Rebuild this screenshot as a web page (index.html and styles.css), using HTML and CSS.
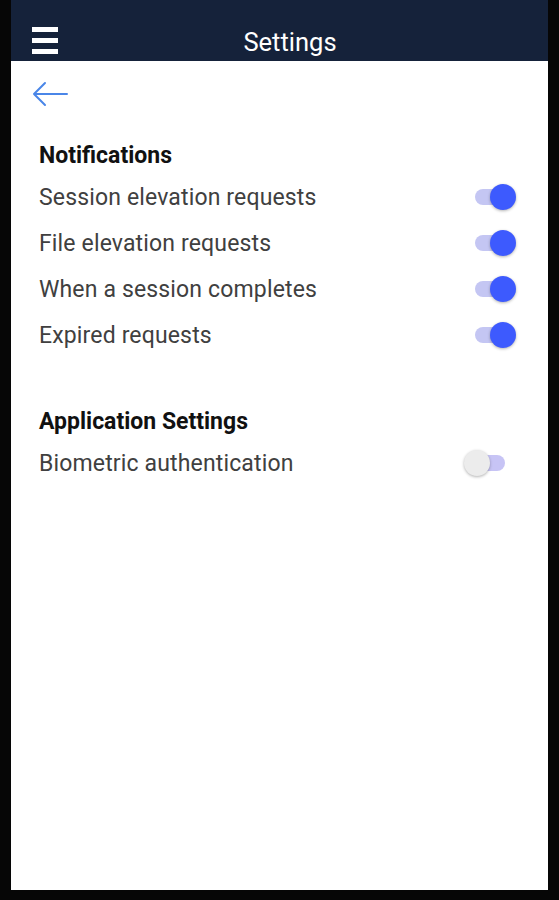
FILE: index.html
```html
<!DOCTYPE html>
<html lang="en">
<head>
    <meta charset="UTF-8">
    <meta name="viewport" content="width=device-width, initial-scale=1.0">
    <title>Settings</title>
    <link rel="stylesheet" href="styles.css">
</head>
<body>
    <div class="phone">
        <header class="topbar">
            <button class="menu-btn" aria-label="Menu">
                <span></span><span></span><span></span>
            </button>
            <h1>Settings</h1>
        </header>

        <main class="screen">
            <a class="back" href="#" aria-label="Back">
                <svg width="36" height="26" viewBox="0 0 36 26">
                    <path d="M35 13H2M13 2L2 13l11 11" fill="none" stroke="#4a86e8" stroke-width="2" stroke-linecap="round" stroke-linejoin="round"/>
                </svg>
            </a>

            <section class="group">
                <h2>Notifications</h2>
                <div class="row">
                    <span>Session elevation requests</span>
                    <label class="switch"><input type="checkbox" checked><i></i></label>
                </div>
                <div class="row">
                    <span>File elevation requests</span>
                    <label class="switch"><input type="checkbox" checked><i></i></label>
                </div>
                <div class="row">
                    <span>When a session completes</span>
                    <label class="switch"><input type="checkbox" checked><i></i></label>
                </div>
                <div class="row">
                    <span>Expired requests</span>
                    <label class="switch"><input type="checkbox" checked><i></i></label>
                </div>
            </section>

            <section class="group">
                <h2>Application Settings</h2>
                <div class="row">
                    <span>Biometric authentication</span>
                    <label class="switch"><input type="checkbox"><i></i></label>
                </div>
            </section>
        </main>
    </div>
</body>
</html>
```

FILE: styles.css
```css
html, body {
    margin: 0;
    height: 100%;
    background: #060606;
}
body {
    font-family: Roboto, "Noto Sans", Arial, sans-serif;
}
.phone {
    height: 900px;
    box-sizing: border-box;
    padding: 0 11px 10px 11px;
    display: flex;
    flex-direction: column;
}
.topbar {
    height: 61px;
    background: #15223a;
    display: flex;
    align-items: flex-end;
    justify-content: center;
    position: relative;
    flex-shrink: 0;
    padding-left: 21px;
}
.topbar h1 {
    margin: 0 0 4px;
    color: #fff;
    font-size: 25.5px;
    font-weight: 400;
    line-height: 30px;
}
.menu-btn {
    position: absolute;
    left: 21px;
    top: 27px;
    width: 26px;
    padding: 0;
    border: none;
    background: none;
    display: flex;
    flex-direction: column;
    gap: 6px;
}
.menu-btn span {
    display: block;
    height: 5px;
    background: #fff;
}
.screen {
    flex: 1;
    background: #fff;
    padding: 20px 40px 0 28px;
}
.back {
    display: block;
    width: 36px;
    height: 26px;
    margin-left: -7px;
}
.back svg {
    display: block;
}
.group {
    margin-top: 35px;
}
.group + .group {
    margin-top: 50px;
}
.group h2 {
    margin: 0 0 4px;
    font-size: 23px;
    font-weight: 700;
    color: #111;
    line-height: 28px;
}
.row {
    height: 46px;
    display: flex;
    align-items: center;
    justify-content: space-between;
    font-size: 23px;
    letter-spacing: 0.15px;
    color: #404040;
}
.switch {
    position: relative;
    width: 42px;
    height: 26px;
    margin-right: 2px;
}
.switch input {
    display: none;
}
.switch i {
    position: absolute;
    left: 11px;
    right: 4px;
    top: 5px;
    height: 16px;
    border-radius: 8px;
    background: #c4c6f3;
}
.switch i::after {
    content: "";
    position: absolute;
    top: -5px;
    left: 15px;
    width: 26px;
    height: 26px;
    border-radius: 50%;
    background: #3d5afe;
    box-shadow: 0 1px 3px rgba(0, 0, 0, 0.3);
}
.switch input:not(:checked) + i {
    left: 4px;
    right: 1px;
    background: #c7c4f5;
}
.switch input:not(:checked) + i::after {
    left: -4px;
    background: #ececec;
}
```
